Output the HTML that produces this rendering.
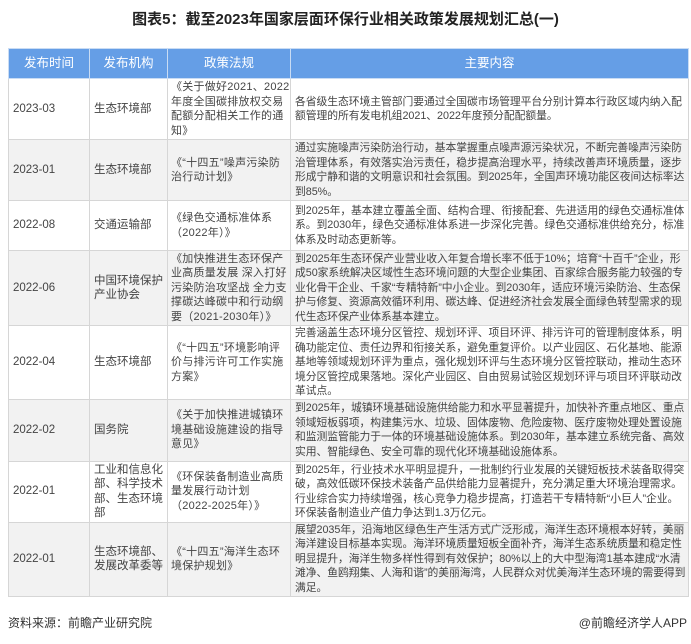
<!DOCTYPE html>
<html><head><meta charset="utf-8"><style>
body{margin:0;width:691px;height:644px;background:#fff;font-family:"Liberation Sans","Noto Sans CJK SC",sans-serif;color:#444;position:relative;overflow:hidden}
h1{position:absolute;top:8px;left:0;width:691px;text-align:center;margin:0;font-size:15px;font-weight:bold;color:#222}
table{position:absolute;left:8px;top:48px;border-collapse:collapse;table-layout:fixed;width:680px}
td,th{border:1px solid #d6d6d6;font-size:11.5px;line-height:14.5px;padding:0 3px;vertical-align:middle;text-align:left;overflow:hidden}
th{background:#659ee6;color:#fff;font-weight:normal;text-align:center;font-size:12.5px;height:29px;border-color:#c9dcf4}
tr:nth-child(odd) td{background:#f2f2f2}
td.c1,td.c2{font-size:11.5px;padding-left:4px}
td.c3{font-size:11px;letter-spacing:0.25px;padding:0 0 0 3px}
td.c4{font-size:10.8px;letter-spacing:-0.05px;padding-left:4px;padding-right:2px}
.f{position:absolute;top:614px;font-size:12px;color:#333}
</style></head><body>
<h1>图表5：截至2023年国家层面环保行业相关政策发展规划汇总(一)</h1>
<table>
<colgroup><col style="width:81px"><col style="width:78px"><col style="width:123px"><col style="width:398px"></colgroup>
<tr><th>发布时间</th><th>发布机构</th><th>政策法规</th><th>主要内容</th></tr>
<tr style="height:61px"><td class="c1">2023-03</td><td class="c2">生态环境部</td><td class="c3">《关于做好2021、2022年度全国碳排放权交易配额分配相关工作的通知》</td><td class="c4">各省级生态环境主管部门要通过全国碳市场管理平台分别计算本行政区域内纳入配额管理的所有发电机组2021、2022年度预分配配额量。</td></tr>
<tr style="height:61px"><td class="c1">2023-01</td><td class="c2">生态环境部</td><td class="c3">《“十四五”噪声污染防治行动计划》</td><td class="c4">通过实施噪声污染防治行动，基本掌握重点噪声源污染状况，不断完善噪声污染防治管理体系，有效落实治污责任，稳步提高治理水平，持续改善声环境质量，逐步形成宁静和谐的文明意识和社会氛围。到2025年，全国声环境功能区夜间达标率达到85%。</td></tr>
<tr style="height:50px"><td class="c1">2022-08</td><td class="c2">交通运输部</td><td class="c3">《绿色交通标准体系（2022年）》</td><td class="c4">到2025年，基本建立覆盖全面、结构合理、衔接配套、先进适用的绿色交通标准体系。到2030年，绿色交通标准体系进一步深化完善。绿色交通标准供给充分，标准体系及时动态更新等。</td></tr>
<tr style="height:75px"><td class="c1">2022-06</td><td class="c2">中国环境保护产业协会</td><td class="c3">《加快推进生态环保产业高质量发展 深入打好污染防治攻坚战 全力支撑碳达峰碳中和行动纲要（2021-2030年）》</td><td class="c4">到2025年生态环保产业营业收入年复合增长率不低于10%；培育“十百千”企业，形成50家系统解决区域性生态环境问题的大型企业集团、百家综合服务能力较强的专业化骨干企业、千家“专精特新”中小企业。到2030年，适应环境污染防治、生态保护与修复、资源高效循环利用、碳达峰、促进经济社会发展全面绿色转型需求的现代生态环保产业体系基本建立。</td></tr>
<tr style="height:73px"><td class="c1">2022-04</td><td class="c2">生态环境部</td><td class="c3">《“十四五”环境影响评价与排污许可工作实施方案》</td><td class="c4">完善涵盖生态环境分区管控、规划环评、项目环评、排污许可的管理制度体系，明确功能定位、责任边界和衔接关系，避免重复评价。以产业园区、石化基地、能源基地等领域规划环评为重点，强化规划环评与生态环境分区管控联动，推动生态环境分区管控成果落地。深化产业园区、自由贸易试验区规划环评与项目环评联动改革试点。</td></tr>
<tr style="height:62px"><td class="c1">2022-02</td><td class="c2">国务院</td><td class="c3">《关于加快推进城镇环境基础设施建设的指导意见》</td><td class="c4">到2025年，城镇环境基础设施供给能力和水平显著提升，加快补齐重点地区、重点领域短板弱项，构建集污水、垃圾、固体废物、危险废物、医疗废物处理处置设施和监测监管能力于一体的环境基础设施体系。到2030年，基本建立系统完备、高效实用、智能绿色、安全可靠的现代化环境基础设施体系。</td></tr>
<tr style="height:61px"><td class="c1">2022-01</td><td class="c2">工业和信息化部、科学技术部、生态环境部</td><td class="c3">《环保装备制造业高质量发展行动计划（2022-2025年）》</td><td class="c4">到2025年，行业技术水平明显提升，一批制约行业发展的关键短板技术装备取得突破，高效低碳环保技术装备产品供给能力显著提升，充分满足重大环境治理需求。行业综合实力持续增强，核心竞争力稳步提高，打造若干专精特新“小巨人”企业。环保装备制造业产值力争达到1.3万亿元。</td></tr>
<tr style="height:74px"><td class="c1">2022-01</td><td class="c2">生态环境部、发展改革委等</td><td class="c3">《“十四五”海洋生态环境保护规划》</td><td class="c4">展望2035年，沿海地区绿色生产生活方式广泛形成，海洋生态环境根本好转，美丽海洋建设目标基本实现。海洋环境质量短板全面补齐，海洋生态系统质量和稳定性明显提升，海洋生物多样性得到有效保护；80%以上的大中型海湾1基本建成“水清滩净、鱼鸥翔集、人海和谐”的美丽海湾，人民群众对优美海洋生态环境的需要得到满足。</td></tr>
</table>
<div class="f" style="left:8px">资料来源：前瞻产业研究院</div>
<div class="f" style="right:4px">@前瞻经济学人APP</div>
</body></html>
